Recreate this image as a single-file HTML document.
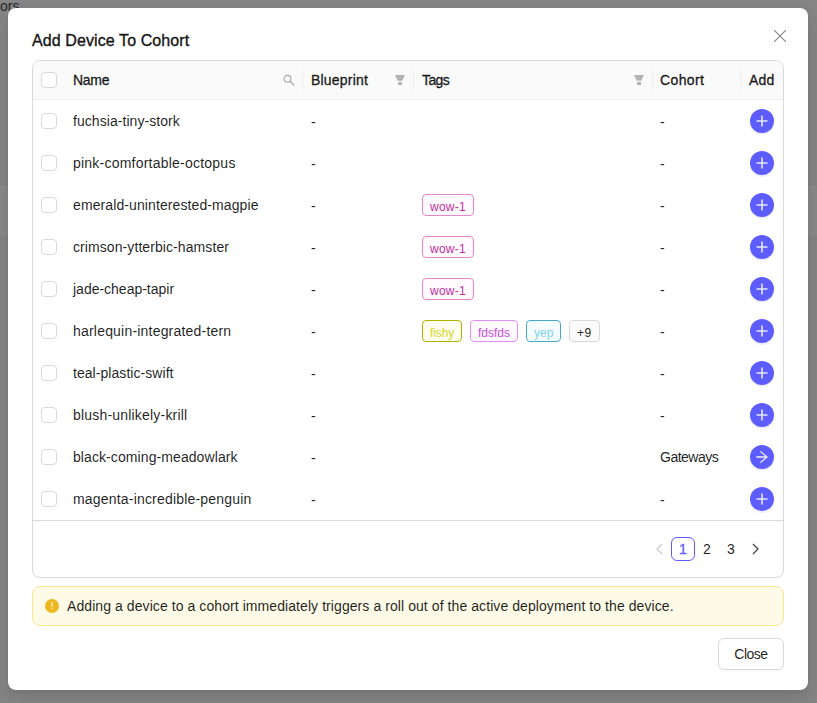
<!DOCTYPE html>
<html><head><meta charset="utf-8">
<style>
*{box-sizing:border-box;margin:0;padding:0}
html,body{width:817px;height:703px;overflow:hidden}
body{background:#878787;font-family:"Liberation Sans",sans-serif;font-size:14px;color:rgba(0,0,0,0.88);position:relative}
.a{position:absolute}
.bgtxt{left:0px;top:-1px;font-size:14px;line-height:14px;color:#262626}
.band{left:0;width:8px;top:184px;height:52px;background:#8b8b8b;border-top:1px solid #828282}
.modal{left:8px;top:8px;width:800px;height:682px;background:#fff;border-radius:8px;box-shadow:0 6px 16px 0 rgba(0,0,0,0.08),0 3px 6px -4px rgba(0,0,0,0.12),0 9px 28px 8px rgba(0,0,0,0.05)}
.title{left:24px;top:22px;font-size:16px;font-weight:normal;-webkit-text-stroke:0.45px currentColor;line-height:22px;letter-spacing:0.1px;color:rgba(0,0,0,0.88)}
.close{left:766px;top:22px;width:12px;height:12px}
.tbl{left:24px;top:52px;width:752px;height:518px;border:1px solid #d9d9d9;border-radius:8px;overflow:hidden}
.thead{left:0;top:0;width:750px;height:39px;background:#fafafa;border-bottom:1px solid #f0f0f0}
.th{top:8px;line-height:22px;font-weight:normal;-webkit-text-stroke:0.35px currentColor;font-size:14px}
.sep{top:8px;width:1px;height:22px;background:#f0f0f0}
.cb{width:16px;height:16px;border:1px solid #d9d9d9;border-radius:4px;background:#fff}
.row{left:0;width:750px;height:42px}
.cell{top:10px;line-height:22px;white-space:nowrap}
.btn{width:24px;height:24px;border-radius:50%;background:#5c5cff;box-shadow:0 2px 0 rgba(92,92,255,0.1)}
.tag{top:10px;height:22px;line-height:20px;font-size:12px;padding:1.5px 7px 0;border:1px solid;border-radius:4px;white-space:nowrap}
.pager{left:0;top:459px;width:750px;height:57px;border-top:1px solid #d9d9d9}
.pg{top:16px;width:24px;height:24px;line-height:22px;text-align:center;border:1px solid transparent;border-radius:6px}
.alert{left:24px;top:578px;width:752px;height:40px;background:#fdfbe7;border:1px solid #fbe68c;border-radius:8px}
.cbtn{left:710px;top:630px;width:66px;height:32px;border:1px solid #d9d9d9;border-radius:6px;line-height:30px;text-align:center;letter-spacing:-0.5px;background:#fff;box-shadow:0 2px 0 rgba(0,0,0,0.02)}
</style></head>
<body>
<div class="a bgtxt">ors</div>
<div class="a band"></div>
<div class="a band" style="left:808px;width:9px"></div>
<div class="a modal">
  <div class="a title">Add Device To Cohort</div>
  <svg class="a close" viewBox="0 0 12 12"><path d="M0.6 0.6L11.4 11.4M11.4 0.6L0.6 11.4" stroke="#8c8c8c" stroke-width="1.3" stroke-linecap="round"/></svg>
  <div class="a tbl">
    <div class="a thead">
      <div class="a cb" style="left:8px;top:11px"></div>
      <div class="a th" style="left:40px;letter-spacing:-0.28px">Name</div>
      <svg class="a" style="left:250px;top:13px" width="12" height="12" viewBox="0 0 12 12"><circle cx="4.5" cy="4.8" r="3.4" fill="none" stroke="#a6a6a6" stroke-width="1.1"/><path d="M7 7.3L11 11.2" stroke="#a6a6a6" stroke-width="1.3"/></svg>
      <div class="a sep" style="left:269px"></div>
      <div class="a th" style="left:278px;letter-spacing:0.2px">Blueprint</div>
      <svg class="a FUN" style="left:362px;top:14px" width="10" height="10" viewBox="0 0 10 10"><path d="M0 0H10L7.3 5.7H2.7Z" fill="#b3b3b3"/><rect x="3" y="7" width="4" height="3" fill="#b3b3b3"/></svg>
      <div class="a sep" style="left:380px"></div>
      <div class="a th" style="left:389px;letter-spacing:-0.6px">Tags</div>
      <svg class="a FUN" style="left:601px;top:14px" width="10" height="10" viewBox="0 0 10 10"><path d="M0 0H10L7.3 5.7H2.7Z" fill="#b3b3b3"/><rect x="3" y="7" width="4" height="3" fill="#b3b3b3"/></svg>
      <div class="a sep" style="left:619px"></div>
      <div class="a th" style="left:627px;letter-spacing:0.38px">Cohort</div>
      <div class="a sep" style="left:707px"></div>
      <div class="a th" style="left:716px;letter-spacing:0.18px">Add</div>
    </div>
    <div class="a row" style="top:39px">
      <div class="a cb" style="left:8px;top:13px"></div>
      <div class="a cell" style="left:40px;letter-spacing:0.053px">fuchsia-tiny-stork</div>
      <div class="a cell" style="left:278px;top:11px">-</div>
      
      <div class="a cell" style="left:627px"><span style="position:relative;top:1px">-</span></div>
      <div class="a btn" style="left:717px;top:9px"><svg class="a" style="left:6px;top:6px" width="12" height="12" viewBox="0 0 12 12"><path d="M6 0.5V11.5M0.5 6H11.5" stroke="#e8e8ff" stroke-width="1.6"/></svg></div>
    </div>
    <div class="a row" style="top:81px">
      <div class="a cb" style="left:8px;top:13px"></div>
      <div class="a cell" style="left:40px;letter-spacing:0.226px">pink-comfortable-octopus</div>
      <div class="a cell" style="left:278px;top:11px">-</div>
      
      <div class="a cell" style="left:627px"><span style="position:relative;top:1px">-</span></div>
      <div class="a btn" style="left:717px;top:9px"><svg class="a" style="left:6px;top:6px" width="12" height="12" viewBox="0 0 12 12"><path d="M6 0.5V11.5M0.5 6H11.5" stroke="#e8e8ff" stroke-width="1.6"/></svg></div>
    </div>
    <div class="a row" style="top:123px">
      <div class="a cb" style="left:8px;top:13px"></div>
      <div class="a cell" style="left:40px;letter-spacing:0.1px">emerald-uninterested-magpie</div>
      <div class="a cell" style="left:278px;top:11px">-</div>
      <div class="a tag" style="left:389px;color:#c2309c;border-color:#e586c9;background:#fffafd;letter-spacing:0.25px">wow-1</div>
      <div class="a cell" style="left:627px"><span style="position:relative;top:1px">-</span></div>
      <div class="a btn" style="left:717px;top:9px"><svg class="a" style="left:6px;top:6px" width="12" height="12" viewBox="0 0 12 12"><path d="M6 0.5V11.5M0.5 6H11.5" stroke="#e8e8ff" stroke-width="1.6"/></svg></div>
    </div>
    <div class="a row" style="top:165px">
      <div class="a cb" style="left:8px;top:13px"></div>
      <div class="a cell" style="left:40px;letter-spacing:0.083px">crimson-ytterbic-hamster</div>
      <div class="a cell" style="left:278px;top:11px">-</div>
      <div class="a tag" style="left:389px;color:#c2309c;border-color:#e586c9;background:#fffafd;letter-spacing:0.25px">wow-1</div>
      <div class="a cell" style="left:627px"><span style="position:relative;top:1px">-</span></div>
      <div class="a btn" style="left:717px;top:9px"><svg class="a" style="left:6px;top:6px" width="12" height="12" viewBox="0 0 12 12"><path d="M6 0.5V11.5M0.5 6H11.5" stroke="#e8e8ff" stroke-width="1.6"/></svg></div>
    </div>
    <div class="a row" style="top:207px">
      <div class="a cb" style="left:8px;top:13px"></div>
      <div class="a cell" style="left:40px;letter-spacing:-0.007px">jade-cheap-tapir</div>
      <div class="a cell" style="left:278px;top:11px">-</div>
      <div class="a tag" style="left:389px;color:#c2309c;border-color:#e586c9;background:#fffafd;letter-spacing:0.25px">wow-1</div>
      <div class="a cell" style="left:627px"><span style="position:relative;top:1px">-</span></div>
      <div class="a btn" style="left:717px;top:9px"><svg class="a" style="left:6px;top:6px" width="12" height="12" viewBox="0 0 12 12"><path d="M6 0.5V11.5M0.5 6H11.5" stroke="#e8e8ff" stroke-width="1.6"/></svg></div>
    </div>
    <div class="a row" style="top:249px">
      <div class="a cb" style="left:8px;top:13px"></div>
      <div class="a cell" style="left:40px;letter-spacing:0.2px">harlequin-integrated-tern</div>
      <div class="a cell" style="left:278px;top:11px">-</div>
      <div class="a tag" style="left:389px;color:#d6d624;border-color:#b0b000;background:#fdfdf0;letter-spacing:-0.1px">fishy</div><div class="a tag" style="left:437px;color:#c64fe0;border-color:#e58ff6;background:#fefaff">fdsfds</div><div class="a tag" style="left:493px;color:#7fd4ef;border-color:#45a9c9;background:#f5fcff">yep</div><div class="a tag" style="left:536px;color:rgba(0,0,0,0.88);border-color:#d9d9d9;background:#fafafa;letter-spacing:0.6px">+9</div>
      <div class="a cell" style="left:627px"><span style="position:relative;top:1px">-</span></div>
      <div class="a btn" style="left:717px;top:9px"><svg class="a" style="left:6px;top:6px" width="12" height="12" viewBox="0 0 12 12"><path d="M6 0.5V11.5M0.5 6H11.5" stroke="#e8e8ff" stroke-width="1.6"/></svg></div>
    </div>
    <div class="a row" style="top:291px">
      <div class="a cb" style="left:8px;top:13px"></div>
      <div class="a cell" style="left:40px;letter-spacing:0.053px">teal-plastic-swift</div>
      <div class="a cell" style="left:278px;top:11px">-</div>
      
      <div class="a cell" style="left:627px"><span style="position:relative;top:1px">-</span></div>
      <div class="a btn" style="left:717px;top:9px"><svg class="a" style="left:6px;top:6px" width="12" height="12" viewBox="0 0 12 12"><path d="M6 0.5V11.5M0.5 6H11.5" stroke="#e8e8ff" stroke-width="1.6"/></svg></div>
    </div>
    <div class="a row" style="top:333px">
      <div class="a cb" style="left:8px;top:13px"></div>
      <div class="a cell" style="left:40px;letter-spacing:0.195px">blush-unlikely-krill</div>
      <div class="a cell" style="left:278px;top:11px">-</div>
      
      <div class="a cell" style="left:627px"><span style="position:relative;top:1px">-</span></div>
      <div class="a btn" style="left:717px;top:9px"><svg class="a" style="left:6px;top:6px" width="12" height="12" viewBox="0 0 12 12"><path d="M6 0.5V11.5M0.5 6H11.5" stroke="#e8e8ff" stroke-width="1.6"/></svg></div>
    </div>
    <div class="a row" style="top:375px">
      <div class="a cb" style="left:8px;top:13px"></div>
      <div class="a cell" style="left:40px;letter-spacing:0.086px">black-coming-meadowlark</div>
      <div class="a cell" style="left:278px;top:11px">-</div>
      
      <div class="a cell" style="left:627px"><span style="letter-spacing:-0.5px">Gateways</span></div>
      <div class="a btn" style="left:717px;top:9px"><svg class="a" style="left:6px;top:6px" width="12" height="12" viewBox="0 0 12 12"><path d="M0.3 6H10.5" stroke="#e8e8ff" stroke-width="1.6"/><path d="M4.3 0.4L11 6L4.3 11.6" fill="none" stroke="#f4f4ff" stroke-width="1.2"/></svg></div>
    </div>
    <div class="a row" style="top:417px">
      <div class="a cb" style="left:8px;top:13px"></div>
      <div class="a cell" style="left:40px;letter-spacing:0.188px">magenta-incredible-penguin</div>
      <div class="a cell" style="left:278px;top:11px">-</div>
      
      <div class="a cell" style="left:627px"><span style="position:relative;top:1px">-</span></div>
      <div class="a btn" style="left:717px;top:9px"><svg class="a" style="left:6px;top:6px" width="12" height="12" viewBox="0 0 12 12"><path d="M6 0.5V11.5M0.5 6H11.5" stroke="#e8e8ff" stroke-width="1.6"/></svg></div>
    </div>
    <div class="a pager">
      <svg class="a" style="left:622px;top:22px" width="9" height="12" viewBox="0 0 9 12"><path d="M7 1L2 6L7 11" fill="none" stroke="#c8c8c8" stroke-width="1.15"/></svg>
      <div class="a pg" style="left:638px;border-color:#5c5cff;color:#5c5cff;-webkit-text-stroke:0.3px #5c5cff">1</div>
      <div class="a pg" style="left:662px">2</div>
      <div class="a pg" style="left:686px">3</div>
      <svg class="a" style="left:718px;top:22px" width="9" height="12" viewBox="0 0 9 12"><path d="M2 1L7 6L2 11" fill="none" stroke="#3a3a3a" stroke-width="1.15"/></svg>
    </div>
  </div>
  <div class="a alert">
    <svg class="a" style="left:12px;top:12px" width="14" height="14" viewBox="0 0 14 14"><circle cx="7" cy="7" r="7" fill="#ecb71f"/><rect x="6.05" y="3.1" width="1.9" height="5.1" fill="#fff" fill-opacity="0.55"/><rect x="6.05" y="9.1" width="1.9" height="1.2" fill="#fff" fill-opacity="0.45"/></svg>
    <div class="a" style="left:34px;top:8px;line-height:22px;white-space:nowrap;letter-spacing:0.075px">Adding a device to a cohort immediately triggers a roll out of the active deployment to the device.</div>
  </div>
  <div class="a cbtn">Close</div>
</div>
</body></html>
